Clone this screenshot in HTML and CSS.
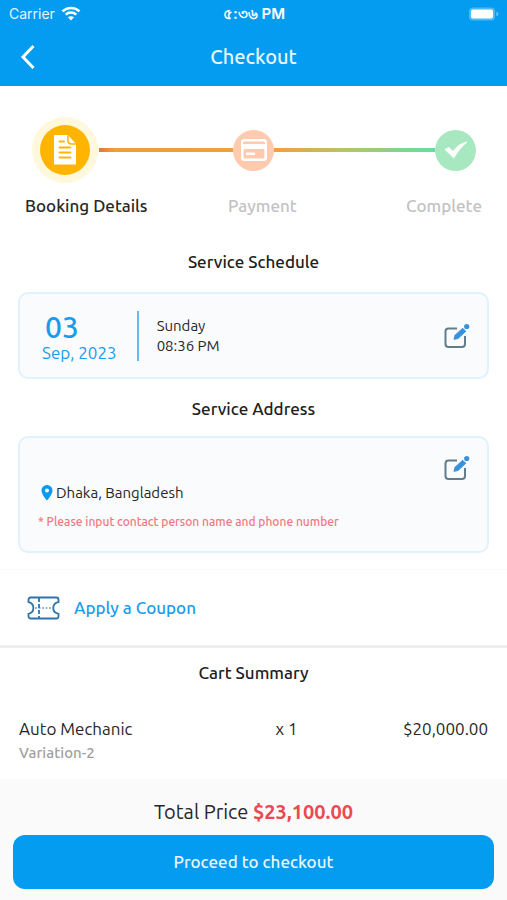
FILE: index.html
```html
<!DOCTYPE html>
<html lang="en">
<head>
<meta charset="utf-8">
<meta name="viewport" content="width=device-width, initial-scale=1">
<title>Checkout</title>
<link rel="stylesheet" href="styles.css">
</head>
<body>
<div class="app">
  <header class="header">
    <div class="status">
      <span class="carrier">Carrier
        <svg width="20" height="15" viewBox="0 0 20 15" fill="none" stroke="#fff" stroke-width="2.6"><path d="M1.5 5.4C6.2.8 13.800.8 18.500 5.400M4.700 8.600C7.600 5.800 12.400 5.800 15.300 8.600"/><path d="M10 14.500 6.900 11.300C8.600 9.800 11.400 9.800 13.100 11.300Z" fill="#fff" stroke="none"/></svg>
      </span>
      <span class="clock">৫:৩৬ PM</span>
      <svg class="battery" width="31" height="14" viewBox="0 0 31 14"><rect x="1" y=".5" width="26" height="13" rx="4" fill="#4db9f6"/><rect x="3" y="2.500" width="22" height="9" rx="2" fill="#fff"/><path d="M28.500 4.500c2.400 1 2.400 4 0 5z" fill="#6cc6f8"/></svg>
    </div>
    <div class="titlebar">
      <button class="back" type="button" aria-label="Back"><svg width="16" height="26" viewBox="0 0 16 26" fill="none" stroke="#fff" stroke-width="3"><path d="M13.500 2 3 13 13.500 24"/></svg></button>
      <h1>Checkout</h1>
    </div>
  </header>

  <main class="content">
    <section class="progress">
      <div class="track">
        <span class="halo"><span class="dot dot-booking"><svg width="24" height="30" viewBox="0 0 24 30"><path d="M1 0h14l8 9v20.500H1z" fill="#fff"/><path d="M15 0v5.500c0 2 1.500 3.500 3.500 3.500H23" fill="none" stroke="#ffb500" stroke-width="1.500"/><path d="M6.500 6.500h4.500M6.500 12.500h11M6.500 17.500h11M6.500 22.500h11" stroke="#ffb500" stroke-width="1.800" stroke-linecap="round"/></svg></span></span>
        <span class="line line-first"></span>
        <span class="dot dot-payment"><svg width="26" height="22" viewBox="0 0 26 22"><rect x="1.300" y="1.300" width="23.400" height="19.400" rx="2" fill="none" stroke="#fff" stroke-width="2.600"/><path d="M2 7.500h22" stroke="#fff" stroke-width="5"/><path d="M2 4.200h22" stroke="#ffcaae" stroke-width="1.800"/><path d="M5 14.800h9" stroke="#fff" stroke-width="2.600"/></svg></span>
        <span class="line line-second"></span>
        <span class="dot dot-complete"><svg width="24" height="18" viewBox="0 0 24 18"><path d="M1 8.500 5 6.500 9 10.500C12 6.500 16 2.500 23 1 18 5 13.500 10.500 9.800 17Z" fill="#fff" stroke="#fff" stroke-width=".8"/></svg></span>
      </div>
      <ol class="labels"><li class="current">Booking Details</li><li>Payment</li><li>Complete</li></ol>
    </section>

    <section>
      <h2>Service Schedule</h2>
      <div class="card schedule">
        <div class="date"><strong>03</strong><span>Sep, 2023</span></div>
        <div class="time">Sunday<br>08:36 PM</div>
        <button class="edit" type="button" aria-label="Edit schedule"><svg width="26" height="26" viewBox="0 0 26 26"><path d="M13 5.500H4.500a3 3 0 0 0-3 3v12.500a3 3 0 0 0 3 3H18a3 3 0 0 0 3-3V13" fill="none" stroke="#607d8b" stroke-width="2"/><path d="m10 16.300 1-4 7.700-7 3 3-7.700 7.200Z" fill="#3792dc" stroke="#3792dc" stroke-linejoin="round"/><circle cx="22.700" cy="3.500" r="2.600" fill="#3792dc"/></svg></button>
      </div>
    </section>

    <section>
      <h2>Service Address</h2>
      <div class="card address">
        <div class="place">
          <p class="city"><svg width="12" height="16" viewBox="0 0 12 16"><path fill-rule="evenodd" d="M6 0a5.500 5.500 0 0 0-5.500 5.500C.5 9.500 6 15.500 6 15.500s5.500-6 5.500-10A5.500 5.500 0 0 0 6 0Zm0 3.500a2 2 0 1 1 0 4 2 2 0 0 1 0-4Z" fill="#039cf0"/></svg>Dhaka, Bangladesh</p>
          <p class="warning">* Please input contact person name and phone number</p>
        </div>
        <button class="edit" type="button" aria-label="Edit address"><svg width="26" height="26" viewBox="0 0 26 26"><path d="M13 5.500H4.500a3 3 0 0 0-3 3v12.500a3 3 0 0 0 3 3H18a3 3 0 0 0 3-3V13" fill="none" stroke="#607d8b" stroke-width="2"/><path d="m10 16.300 1-4 7.700-7 3 3-7.700 7.200Z" fill="#3792dc" stroke="#3792dc" stroke-linejoin="round"/><circle cx="22.700" cy="3.500" r="2.600" fill="#3792dc"/></svg></button>
      </div>
    </section>

    <button class="coupon" type="button">
      <svg width="34" height="24" viewBox="0 0 34 24" fill="none" stroke="#2d73ae" stroke-width="1.800"><path d="M4.500 1.500h26c1.500 0 2 1 2 2.500v2.200c-7 1.300-7 10.300 0 11.600V20c0 1.500-.5 2.500-2 2.500h-26c-1.500 0-2-1-2-2.500v-2.200c6.500-1.300 6.500-10.300 0-11.600V4c0-1.500.5-2.500 2-2.500Z"/><path d="M13 2v20" stroke-dasharray="4 2"/><path d="M9 12h17" stroke-width="1.200" stroke-dasharray="2 1.500"/></svg>
      Apply a Coupon
    </button>

    <section>
      <h2>Cart Summary</h2>
      <table class="cart">
        <tr><td>Auto Mechanic<small>Variation-2</small></td><td>x 1</td><td>$20,000.00</td></tr>
      </table>
    </section>
  </main>

  <footer class="footer">
    <p class="total">Total Price <strong>$23,100.00</strong></p>
    <button class="proceed" type="button">Proceed to checkout</button>
  </footer>
</div>
</body>
</html>
```
FILE: styles.css
```css
* { box-sizing: border-box; }
body, h1, h2, p, ol { margin: 0; padding: 0; }
body {
  background: #fff;
  color: #272727;
  font-family: Ubuntu, "Noto Sans", "Open Sans", sans-serif;
  font-size: 17px;
  line-height: 20px;
}
button {
  padding: 0;
  border: 0;
  background: none;
  color: inherit;
  font: inherit;
  cursor: pointer;
}
svg { display: block; flex: none; }

.app { display: flex; flex-direction: column; min-height: 100vh; }

.header { background: #039cf0; color: #fff; }
.status {
  display: grid;
  grid-template-columns: 1fr auto 1fr;
  align-items: center;
  height: 27px;
  padding: 0 8px 0 9px;
  font-family: Inter, "Noto Sans", sans-serif;
  font-size: 14px;
}
.carrier { display: flex; align-items: center; gap: 6px; color: #e3f5ff; }
.clock { font-size: 15px; font-weight: 600; }
.battery { justify-self: end; }
.titlebar {
  display: grid;
  grid-template-columns: 1fr auto 1fr;
  align-items: center;
  height: 59px;
  padding: 0 20px;
}
.back { justify-self: start; }
.titlebar h1 { color: #e8f7ff; font-size: 20px; font-weight: 500; line-height: 24px; }

.content { flex: 1; }
.progress { padding: 31px 25px 0; }
.track { display: flex; align-items: center; padding: 0 6px 0 7px; }
.halo {
  display: grid;
  place-items: center;
  width: 66px;
  height: 66px;
  border-radius: 50%;
  background: #fff8dc;
}
.dot {
  display: grid;
  flex: none;
  place-items: center;
  width: 41px;
  height: 41px;
  border-radius: 50%;
}
.dot-booking { width: 50px; height: 50px; background: #ffb500; }
.dot-payment { background: #ffcaae; }
.dot-complete { background: #a7e8c0; }
.line { height: 4px; }
.line-first { flex: 5; margin-left: 1px; background: linear-gradient(90deg, #ec7143, #ef9f38 12%, #f0a03a); }
.line-second { flex: 6; background: linear-gradient(90deg, #f0a03a, #b5c469 45%, #62dfa0); }
.labels {
  display: grid;
  grid-template-columns: 4fr 3fr 2fr;
  margin-top: 13px;
  color: #c2c2c2;
  font-weight: 500;
  list-style: none;
  white-space: nowrap;
}
.labels .current { color: #272727; }
.labels li:last-child { justify-self: end; }

h2 {
  color: #202020;
  font-size: 17px;
  font-weight: 500;
  line-height: 20px;
  text-align: center;
}
.progress + section { padding-top: 36px; }
.card {
  display: flex;
  margin: 20px 18px;
  border: 2px solid #e1f2fc;
  border-radius: 10px;
  background: #f9fbfc;
}
.schedule { align-items: center; min-height: 87px; padding: 0 17px 0 22px; }
.address { min-height: 117px; margin-top: 17px; margin-bottom: 16px; padding: 0 17px 0 18px; }
.date {
  display: flex;
  flex-direction: column;
  gap: 4px;
  padding: 2px 20px 0 0;
  border-right: 2px solid #60bdf0;
  color: #1a9ceb;
}
.date strong { padding-left: 3px; font-size: 30px; font-weight: 500; line-height: 28px; }
.date span { line-height: 16px; }
.time { padding-left: 18px; font-size: 15px; }
.edit { margin-left: auto; }
.address .edit { align-self: flex-start; margin-top: 17px; }
.place { padding-top: 45px; }
.city { display: flex; align-items: center; gap: 3px; padding-left: 3px; font-size: 15px; }
.warning { margin-top: 9px; color: #ef7880; font-size: 12px; font-weight: 500; }

.coupon {
  display: flex;
  align-items: center;
  gap: 14px;
  width: 100%;
  height: 79px;
  padding: 0 26px;
  border-top: 1px solid #fafafa;
  border-bottom: 3px solid #eee;
  color: #1a9ceb;
  font-weight: 500;
}
.coupon + section { padding-top: 15px; }
.cart { width: 100%; margin-top: 35px; padding: 0 19px; border-spacing: 0; }
.cart td { width: 33%; padding: 0; vertical-align: top; line-height: 22px; }
.cart td:nth-child(2) { padding-left: 66px; text-align: center; }
.cart td:last-child { text-align: right; }
.cart small { display: block; margin-top: 2px; color: #a0a0a0; font-size: 15px; font-weight: 500; }

.footer { padding: 21px 13px 11px; background: #fafafa; }
.total { font-size: 20px; line-height: 24px; text-align: center; }
.total strong { color: #e94b50; font-weight: 700; }
.proceed {
  width: 100%;
  height: 54px;
  margin-top: 11px;
  border-radius: 12px;
  background: #039cf0;
  color: #e8f7ff;
  font-weight: 500;
}
```
